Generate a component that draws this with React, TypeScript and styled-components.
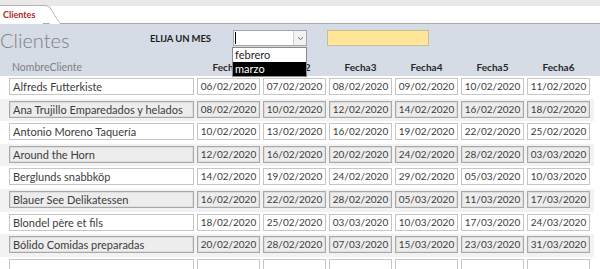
import styled, { createGlobalStyle } from "styled-components";

const Global = createGlobalStyle`
  html, body {
    margin: 0;
    padding: 0;
    background: #ffffff;
  }
  body {
    font-family: Lato, "Open Sans", "Liberation Sans", sans-serif;
    overflow: hidden;
  }
`;

const Page = styled.div`
  width: 600px;
  height: 269px;
  overflow: hidden;
  background: #ffffff;
`;

const TabStrip = styled.div`
  background: #e9e9e9;
  padding-top: 6px;
`;

const TabRow = styled.div`
  display: flex;
  height: 17px;
  background: #ffffff;
  border-bottom: 1px solid #a9a9a9;
`;

const Tab = styled.div`
  position: relative;
  z-index: 1;
  display: flex;
  align-items: center;
  height: 17px;
  margin-bottom: -1px;
  padding: 0 8px 1px 3px;
  border-top: 1px solid #b4b4b4;
  margin-top: -1px;
  background: #ffffff;
  color: #b3262b;
  font-size: 9px;
  font-weight: 700;

  &::after {
    content: "";
    position: absolute;
    top: -1px;
    right: -6px;
    width: 10px;
    height: 18px;
    border-top: 1px solid #b4b4b4;
    border-right: 1px solid #a0a0a0;
    border-top-right-radius: 4px;
    background: #ffffff;
    transform: skewX(32deg);
    transform-origin: top left;
    z-index: -1;
  }
`;

const Header = styled.div`
  height: 52px;
  box-sizing: border-box;
  padding-top: 6px;
  background: #d6dce5;
`;

const TopLine = styled.div`
  display: flex;
  align-items: center;
  height: 16px;
`;

const Title = styled.div`
  width: 150px;
  margin-top: 3px;
  font-size: 20px;
  font-weight: 300;
  line-height: 22px;
  color: #7f7f7f;
`;

const MonthLabel = styled.div`
  width: 83px;
  font-size: 9.5px;
  font-weight: 700;
  color: #1e1e1e;
  letter-spacing: -0.1px;
`;

const ComboWrap = styled.div`
  position: relative;
  width: 74px;
  height: 16px;
`;

const Combo = styled.div`
  display: flex;
  height: 16px;
  box-sizing: border-box;
  border: 1px solid #a6a6a6;
  background: #ffffff;
`;

const Caret = styled.span`
  width: 1px;
  height: 12px;
  margin: 1px 0 0 1px;
  background: #000000;
`;

const ComboButton = styled.div`
  display: flex;
  align-items: center;
  justify-content: center;
  margin-left: auto;
  width: 12px;
  border-left: 1px solid #d0d0d0;
  background: #f3f3f3;
`;

const DropList = styled.div`
  position: absolute;
  top: 17px;
  left: -1px;
  width: 75px;
  box-sizing: border-box;
  border: 1px solid #8a8a8a;
  background: #ffffff;
  z-index: 5;
`;

const Option = styled.div<{ $selected?: boolean }>`
  height: 14px;
  line-height: 14px;
  padding-left: 2px;
  font-size: 11px;
  color: ${({ $selected }) => ($selected ? "#ffffff" : "#262626")};
  background: ${({ $selected }) => ($selected ? "#000000" : "#ffffff")};
`;

const YellowBox = styled.div`
  width: 102px;
  height: 16px;
  margin-left: 20px;
  box-sizing: border-box;
  border: 1px solid #c4bd97;
  background: #ffe699;
`;

const Columns = styled.div`
  display: grid;
  grid-template-columns: 185px repeat(6, 63px);
  column-gap: 3px;
  padding-left: 9px;
`;

const HeadRow = styled(Columns)`
  margin-top: 15px;
  height: 13px;
  align-items: center;
`;

const HeadCell = styled.div<{ $bold?: boolean }>`
  font-size: ${({ $bold }) => ($bold ? "10px" : "10.5px")};
  line-height: 13px;
  text-align: ${({ $bold }) => ($bold ? "center" : "left")};
  padding-left: ${({ $bold }) => ($bold ? "0" : "3px")};
  font-weight: ${({ $bold }) => ($bold ? 700 : 400)};
  color: ${({ $bold }) => ($bold ? "#262626" : "#808080")};
  white-space: nowrap;
`;

const Row = styled(Columns)<{ $alt: boolean }>`
  width: 594px;
  box-sizing: border-box;
  height: 22.6px;
  padding-top: 2px;
  background: ${({ $alt }) => ($alt ? "#f2f2f2" : "#ffffff")};
`;

const Field = styled.div<{ $alt: boolean; $center?: boolean }>`
  height: 17px;
  box-sizing: border-box;
  padding: ${({ $center }) => ($center ? "0" : "0 3px")};
  border: 1px solid ${({ $alt }) => ($alt ? "#a8a8a8" : "#c6c6c6")};
  box-shadow: ${({ $alt }) => ($alt ? "inset 0 0 0 1px #dedede" : "none")};
  background: ${({ $alt }) => ($alt ? "#ededed" : "#ffffff")};
  font-size: ${({ $center }) => ($center ? "10px" : "11px")};
  line-height: 15px;
  color: #3c3c3c;
  text-align: ${({ $center }) => ($center ? "center" : "left")};
  white-space: nowrap;
  overflow: hidden;
`;

const names = [
  "Alfreds Futterkiste",
  "Ana Trujillo Emparedados y helados",
  "Antonio Moreno Taquería",
  "Around the Horn",
  "Berglunds snabbköp",
  "Blauer See Delikatessen",
  "Blondel père et fils",
  "Bólido Comidas preparadas",
  "",
];

const pad = (n: number) => String(n).padStart(2, "0");

// fecha j of row i: starts on Feb 6 + 2i, steps i+1 days (Feb 2020 has 29 days)
const fecha = (i: number, j: number) => {
  let day = 6 + 2 * i + j * (i + 1);
  let month = 2;
  if (day > 29) {
    day -= 29;
    month = 3;
  }
  return `${pad(day)}/${pad(month)}/2020`;
};

const Chevron = () => (
  <svg width="7" height="5" viewBox="0 0 7 5">
    <path d="M1 1.2 L3.5 3.6 L6 1.2" fill="none" stroke="#6e6e6e" strokeWidth="1" />
  </svg>
);

export default function App() {
  return (
    <Page>
      <Global />
      <TabStrip>
        <TabRow>
          <Tab>Clientes</Tab>
        </TabRow>
      </TabStrip>
      <Header>
        <TopLine>
          <Title>Clientes</Title>
          <MonthLabel>ELIJA UN MES</MonthLabel>
          <ComboWrap>
            <Combo>
              <Caret />
              <ComboButton>
                <Chevron />
              </ComboButton>
            </Combo>
            <DropList>
              <Option>febrero</Option>
              <Option $selected>marzo</Option>
            </DropList>
          </ComboWrap>
          <YellowBox />
        </TopLine>
        <HeadRow>
          <HeadCell>NombreCliente</HeadCell>
          {[1, 2, 3, 4, 5, 6].map((n) => (
            <HeadCell key={n} $bold>
              Fecha{n}
            </HeadCell>
          ))}
        </HeadRow>
      </Header>
      {names.map((name, i) => {
        const alt = i % 2 === 1;
        return (
          <Row key={i} $alt={alt}>
            <Field $alt={alt}>{name}</Field>
            {[0, 1, 2, 3, 4, 5].map((j) => (
              <Field key={j} $alt={alt} $center>
                {name ? fecha(i, j) : ""}
              </Field>
            ))}
          </Row>
        );
      })}
    </Page>
  );
}
